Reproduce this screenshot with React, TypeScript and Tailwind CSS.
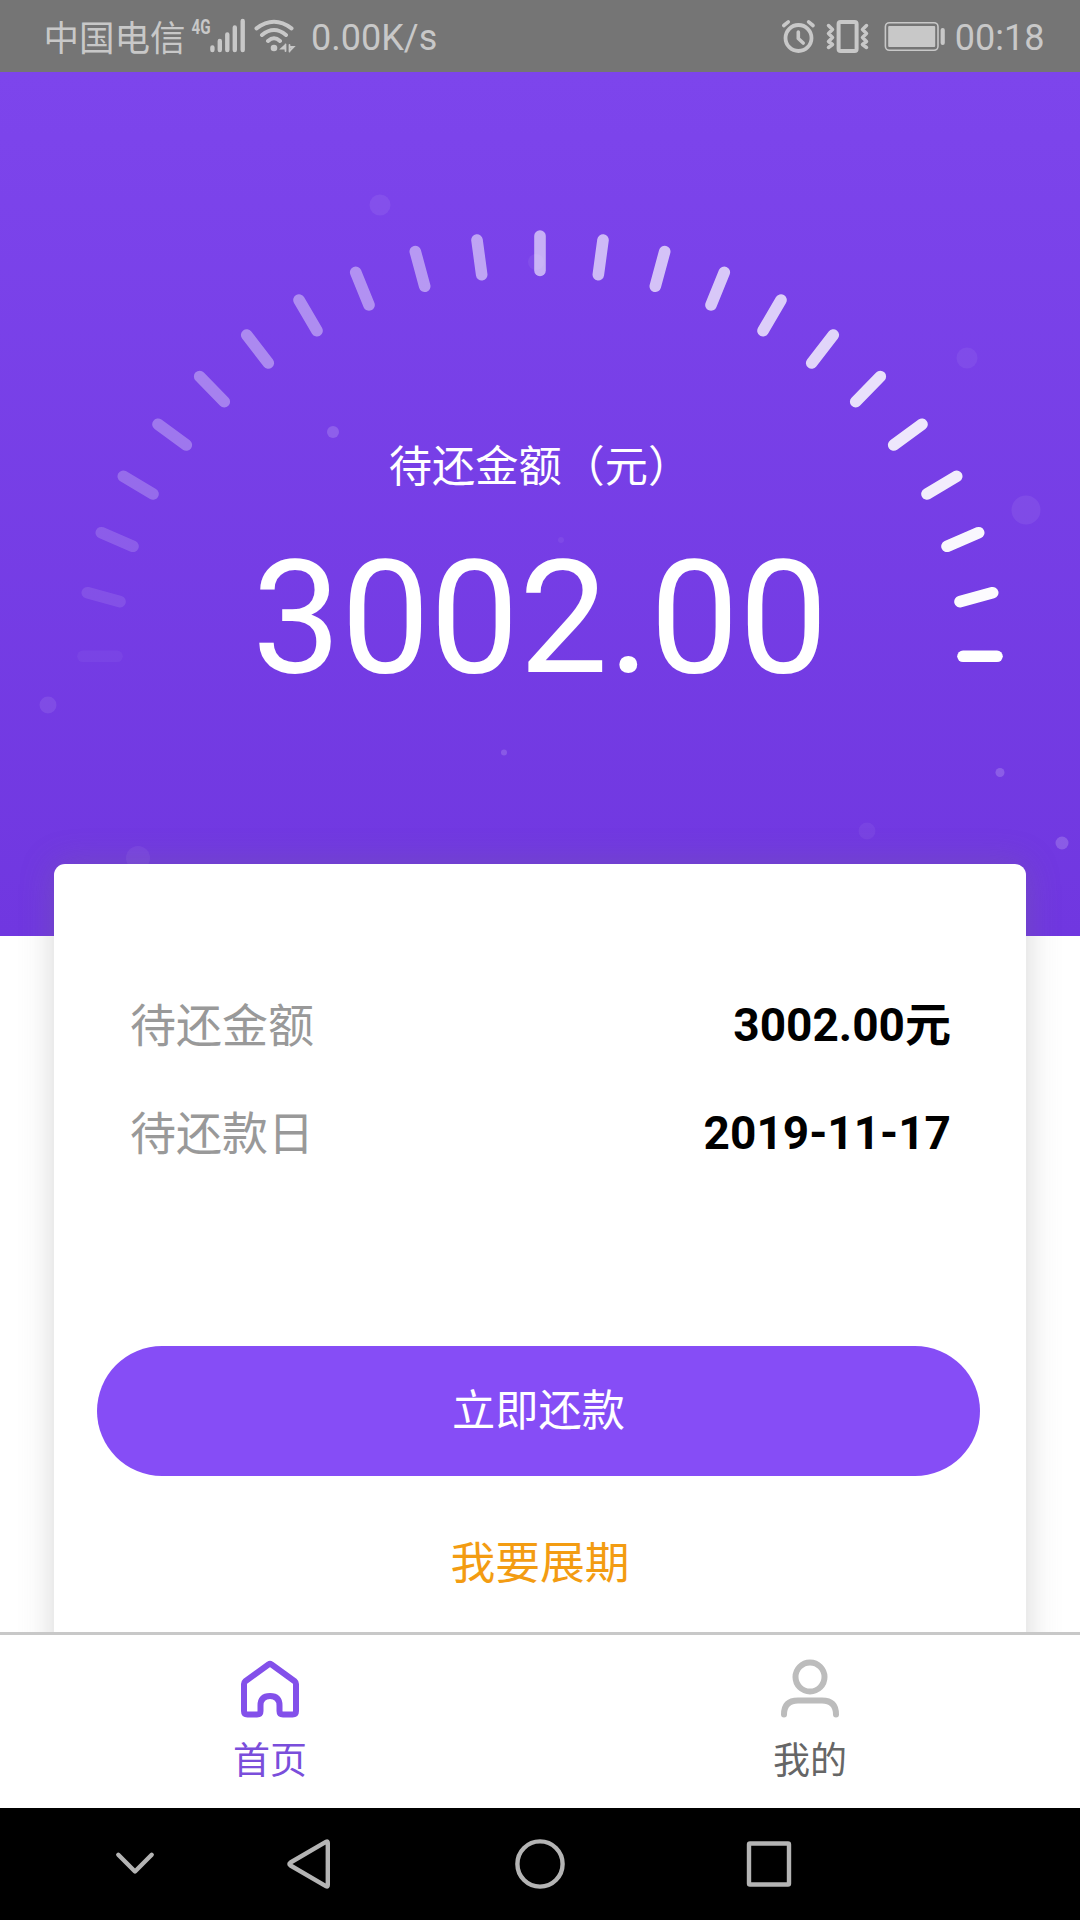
import React, { useState } from 'react';

// outer and inner end of each tick on the left half, the right half is mirrored
const leftTicks = [
  [83, 656.3, 117, 656.3],
  [87.3, 592.7, 120, 601.7],
  [101.3, 532.7, 133, 546.3],
  [123.3, 476.3, 153, 494],
  [158, 424.3, 186.3, 445],
  [199.7, 376.5, 224.3, 401.7],
  [246.7, 335, 268.3, 363],
  [299, 300, 317, 330.7],
  [355.7, 272.3, 369, 305],
  [415.3, 251.5, 424.7, 286.3],
  [477, 240, 481.7, 274.7],
];

const ticks = [
  ...leftTicks,
  [540, 236, 540, 270.5],
  ...[...leftTicks].reverse().map(([x1, y1, x2, y2]) => [1080 - x1, y1, 1080 - x2, y2]),
];

const tickOpacity = [
  0.04, 0.1, 0.16, 0.23, 0.29, 0.34, 0.38, 0.4, 0.42, 0.46, 0.52, 0.58,
  0.63, 0.68, 0.71, 0.74, 0.78, 0.84, 0.88, 0.91, 0.96, 0.98, 1,
];

const bubbles = [
  { x: 380, y: 205, r: 10.5, o: 0.07 },
  { x: 333, y: 432, r: 6, o: 0.17 },
  { x: 536, y: 262, r: 8, o: 0.06 },
  { x: 967, y: 358, r: 10.5, o: 0.06 },
  { x: 1026, y: 510, r: 14.5, o: 0.07 },
  { x: 561, y: 540, r: 3, o: 0.06 },
  { x: 48, y: 705, r: 8.5, o: 0.09 },
  { x: 504, y: 752.5, r: 3, o: 0.16 },
  { x: 1000, y: 772.5, r: 4.5, o: 0.18 },
  { x: 867, y: 831, r: 8.5, o: 0.05 },
  { x: 1062, y: 843, r: 6.5, o: 0.18 },
  { x: 138, y: 858, r: 12, o: 0.06 },
];

function StatusBar() {
  return (
    <header className="flex h-[72px] shrink-0 items-center bg-[#757575] pl-[43.5px] pr-[35.5px] text-[36px] leading-none text-[#c8c8c8]">
      <span className="pt-[7px] text-[35.5px]">中国电信</span>
      <svg className="ml-[4.5px] h-[72px] w-[110px]" viewBox="190 0 110 72" fill="none" stroke="#c8c8c8" strokeLinecap="round">
        <text x="191.5" y="33.8" fontSize="20" fontWeight="700" textLength="19" lengthAdjust="spacingAndGlyphs" fill="#c8c8c8" stroke="none">4G</text>
        <path strokeWidth="4.4" d="M212.4 47.5V50M219.8 41V50M227.3 34.5V50M234.8 27.5V50M242.7 21V50" />
        <path strokeWidth="4" d="M256.5 28.3Q274 15.2 291.5 28.3M262 35Q274 25 286 35M268 41Q274 35.5 280 41" />
        <circle cx="274" cy="48" r="3.3" fill="#c8c8c8" stroke="none" />
        <path d="M285.5 44.5V51M285.5 45L281.5 48.5H285M289.5 45V51.5M289.5 51L293.5 47H289.5" strokeWidth="1.8" />
      </svg>
      <span className="ml-[11px] pt-[4px]">0.00K/s</span>
      <svg className="ml-auto h-[72px] w-[174px]" viewBox="780 0 174 72" fill="none" stroke="#c8c8c8" strokeLinecap="round" strokeLinejoin="round">
        <circle cx="797.5" cy="38" r="13" strokeWidth="3.8" />
        <path strokeWidth="3.6" d="M797.3 32V38.5L802.2 43M782.8 25.5L787.3 21.8M807.6 21.8L812 25.5" />
        <rect x="837.6" y="22" width="18" height="29" rx="2" strokeWidth="4" />
        <path strokeWidth="3.5" d="M827.5 25.5L831.5 29.5L827.5 33.5L831.5 37.5L827.5 41.5L831.5 44.5L827.5 47.5M865.5 25.5L861.5 29.5L865.5 33.5L861.5 37.5L865.5 41.5L861.5 44.5L865.5 47.5" />
        <rect x="884.4" y="22.7" width="52.6" height="27.6" rx="4" strokeWidth="1.6" />
        <rect x="887.2" y="26" width="47" height="21" rx="1" fill="#c8c8c8" stroke="none" />
        <rect x="939.6" y="28" width="4.2" height="17" rx="2" fill="#c8c8c8" stroke="none" />
      </svg>
      <span className="pt-[4px]">00:18</span>
    </header>
  );
}

function Hero() {
  return (
    <section className="relative h-[864px] bg-linear-to-b from-[#7d45ec] to-[#7037e0] text-center text-white">
      <svg className="absolute inset-0 h-full w-full" viewBox="0 72 1080 864">
        {bubbles.map((b, i) => (
          <circle key={i} cx={b.x} cy={b.y} r={b.r} fill="#fff" opacity={b.o} />
        ))}
        {ticks.map(([x1, y1, x2, y2], i) => (
          <line key={i} x1={x1} y1={y1} x2={x2} y2={y2} stroke="#fff" strokeWidth="11.6" strokeLinecap="round" opacity={tickOpacity[i]} />
        ))}
      </svg>
      <div className="relative pt-[364px]">
        <p className="text-[43.2px] leading-[64px]">待还金额（元）</p>
        <p className="mt-[25px] text-[158.4px] leading-[186px]">3002.00</p>
      </div>
    </section>
  );
}

function InfoRow({ label, value }: { label: string; value: string }) {
  return (
    <div className="flex h-[108px] items-center justify-between text-[46px]">
      <span className="pt-[2px] text-[#999]">{label}</span>
      <span className="font-bold text-black">{value}</span>
    </div>
  );
}

function HomeIcon() {
  return (
    <svg className="h-[60px] w-[60px] text-[#8350ea]" viewBox="0 0 60 60" fill="none" stroke="currentColor" strokeWidth="6" strokeLinejoin="round">
      <path d="M28.8 5.3Q30 4.3 31.2 5.3L55 22.5Q56 23.3 56 25V52Q56 55.5 52.5 55.5H43Q39.5 55.5 39.5 52V46.5Q39.5 37 30 37T20.5 46.5V52Q20.5 55.5 17 55.5H7.5Q4 55.5 4 52V25Q4 23.3 5 22.5Z" />
    </svg>
  );
}

function UserIcon() {
  return (
    <svg className="h-[60px] w-[60px] text-[#bcbcbc]" viewBox="0 0 60 60" fill="none" stroke="currentColor" strokeWidth="6" strokeLinecap="round">
      <circle cx="30" cy="18" r="14.5" />
      <path d="M4 55.5Q4 41.5 18 41.5H42Q56 41.5 56 55.5" />
    </svg>
  );
}

const tabs = [
  { key: 'home', label: '首页', icon: <HomeIcon /> },
  { key: 'mine', label: '我的', icon: <UserIcon /> },
];

export default function App() {
  const [active, setActive] = useState('home');

  return (
    <div className="flex h-[1920px] w-[1080px] flex-col overflow-hidden bg-white font-[Roboto,'Noto_Sans_CJK_SC',sans-serif]">
      <StatusBar />

      <main className="h-[1560px] shrink-0 overflow-hidden">
        <Hero />
        <div className="relative mx-[54px] -mt-[72px] h-[900px] rounded-[11px] bg-white pt-[107px] shadow-[0_0_34px_rgba(120,120,120,0.3)]">
          <div className="pl-[76px] pr-[75px]">
            <InfoRow label="待还金额" value="3002.00元" />
            <InfoRow label="待还款日" value="2019-11-17" />
          </div>
          <button className="ml-[43px] mt-[159px] block h-[130px] w-[883px] rounded-full bg-[#864df6] pt-[3px] text-[43.2px] text-white">
            立即还款
          </button>
          <button className="mx-auto mt-[55px] block text-[44.8px] leading-[66px] text-[#f39c12]">我要展期</button>
        </div>
      </main>

      <nav className="flex h-[176px] shrink-0 border-t-[3px] border-[#c8c8c8] bg-white">
        {tabs.map((tab) => (
          <button
            key={tab.key}
            onClick={() => setActive(tab.key)}
            className={`flex flex-1 flex-col items-center pt-[24px] ${
              active === tab.key ? 'text-[#7a4edb]' : 'text-[#666]'
            }`}
          >
            {tab.icon}
            <span className="mt-[15.5px] text-[37px] leading-[54px]">{tab.label}</span>
          </button>
        ))}
      </nav>

      <footer className="flex h-[112px] shrink-0 items-center bg-black">
        <svg className="h-[112px] w-[1080px]" viewBox="0 1808 1080 112" fill="none" stroke="#b4b4b4" strokeWidth="4.4" strokeLinecap="round" strokeLinejoin="round">
          <path d="M118.3 1854.8L135 1871.5L151.7 1854.8" />
          <path d="M326.3 1841.7Q327.8 1841 327.8 1843V1885Q327.8 1887 326.3 1886.3L290.5 1865.5Q288.3 1864 290.5 1862.5Z" />
          <circle cx="540" cy="1864" r="22.6" />
          <rect x="749" y="1843.5" width="40" height="41" rx="1" />
        </svg>
      </footer>
    </div>
  );
}
